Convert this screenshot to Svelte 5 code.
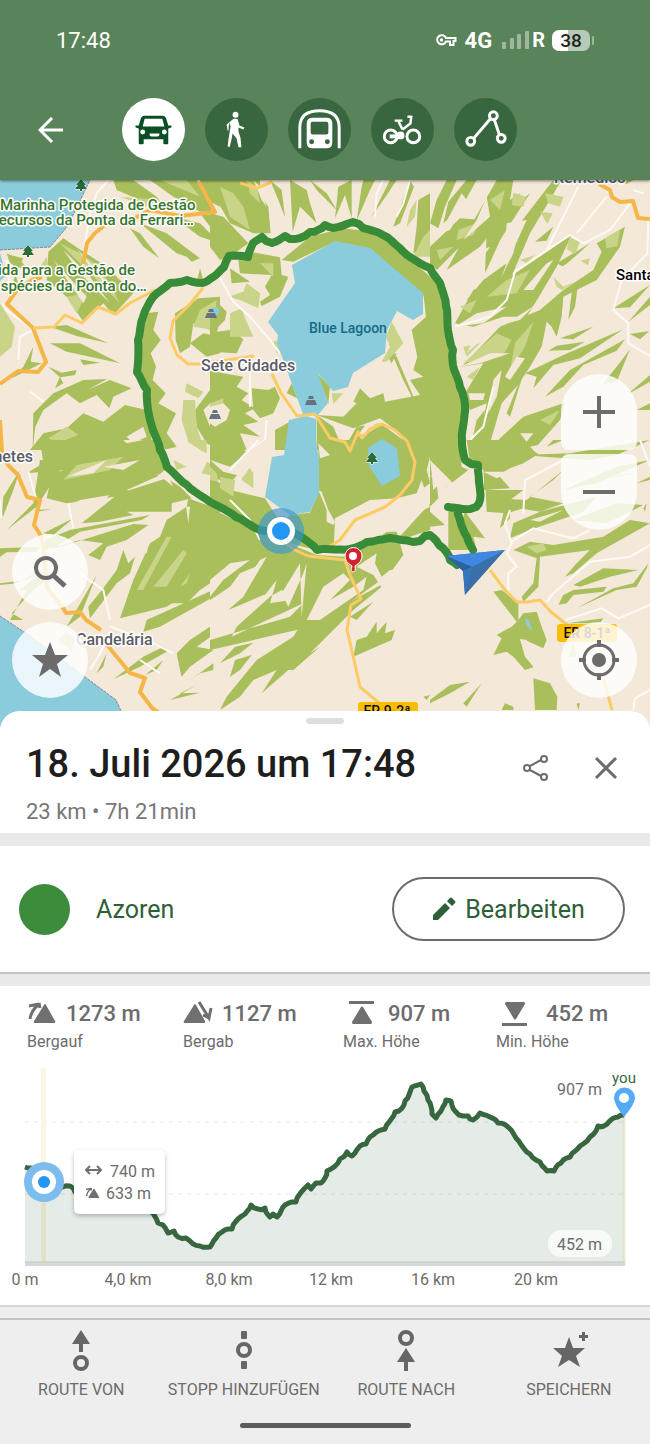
<script>
  let mode = $state('car');
  let picked = $state('');

  const modes = ['car', 'walk', 'train', 'bike', 'ruler'];
  const modeNames = { car: 'Auto', walk: 'Zu Fuß', train: 'ÖPNV', bike: 'Fahrrad', ruler: 'Lineal' };

  const stats = [
    { icon: 'up', value: '1273 m', label: 'Bergauf' },
    { icon: 'down', value: '1127 m', label: 'Bergab' },
    { icon: 'max', value: '907 m', label: 'Max. Höhe' },
    { icon: 'min', value: '452 m', label: 'Min. Höhe' }
  ];

  const actions = [
    { icon: 'from', label: 'ROUTE VON' },
    { icon: 'stop', label: 'STOPP HINZUFÜGEN' },
    { icon: 'to', label: 'ROUTE NACH' },
    { icon: 'save', label: 'SPEICHERN' }
  ];

  // map tiles: forest, light = fields, sand = clearings, road = white roads
  const tiles = [
    {
      x: 0, y: 180, h: 270,
      forest: [
        '340,0 400,0 470,50 500,90 420,60 350,30', '450,0 590,0 640,95 600,95 520,50', '390,145 420,160 478,235 430,200',
        '420,130 500,160 600,235 575,245 560,230 530,220', '520,110 600,130 660,190 600,170', '600,100 660,110 660,180',
        '145,215 190,175 250,215 320,260 400,340 340,405 310,370 250,425 200,350 140,300', '20,220 60,240 90,275 30,250',
        '600,0 660,0 660,80 620,60', '150,440 200,435 325,490 230,468', '150,490 240,490 360,550 200,515', '240,538 300,548 250,555',
        '35,595 70,560 100,500 92,545 125,550', '145,560 185,578 230,570 225,585 180,592', '30,225 70,235 40,300 60,330',
        '100,700 160,640 250,600 322,597 262,630 330,600 395,625 340,650 328,685 290,645 240,670 200,640 130,690 106,740 98,810',
        '90,810 130,760 200,745 250,700 310,725 375,675 440,690 460,810', '435,400 475,395 460,450 482,480 452,520 468,560 458,600 497,640 475,670 528,700 500,760 530,800 490,810 450,700 425,600 412,540 420,450',
        '525,400 595,355 660,350 660,430 630,450 580,430 570,500 540,520 527,480', '570,490 610,460 660,470 660,520 620,530', '585,690 660,590 660,810 620,790 590,740',
        '600,265 612,310 590,310', '180,590 190,610 165,625'
      ],
      light: ['180,190 240,220 300,260 360,370', '200,350 260,340 230,400', '0,370 45,440 35,500 0,530', '580,440 600,390 650,360 640,450', '560,610 610,635 595,655 555,635', '550,660 585,660 590,740 610,800 570,800 545,720', '145,775 200,740 235,765 170,790', '360,50 480,60 470,90', '480,0 560,0 600,50', '120,260 140,230 150,290'],
      sand: ['190,210 270,290 330,370 240,280', '230,205 300,280 350,350 270,260', '160,240 260,350 250,370', '610,690 640,660 660,665 660,740 630,740', '190,700 235,690 195,735 175,720', '380,770 430,740 440,770 400,790'],
      road: ['325,0 290,40 270,100 255,190 250,260', '5,370 20,390 100,450 60,470 55,540', '90,635 130,665', '20,240 30,330']
    },
    {
      x: 210, y: 180, h: 270,
      forest: [
        '0,100 40,110 115,190 80,215 30,240 0,200', '10,0 60,0 110,40 130,160 60,130 20,60', '60,0 150,0 150,40 175,80 182,160 130,160',
        '180,0 215,30 225,112 205,60', '240,0 290,30 300,70 320,130 270,80 248,155', '300,0 350,40 382,92 320,30', '375,115 385,20 425,0 425,115 405,45',
        '440,122 455,20 460,0 495,0 480,30', '485,110 520,60 560,0 540,0', '550,140 600,0 612,20 570,130', '620,140 625,60 660,40 660,200 610,220',
        '215,240 300,170 400,145 520,160 570,210 660,290 660,400 640,345 480,205 375,185 250,245', '85,240 120,215 210,232 215,285 235,290 210,350 155,378 150,365 180,345 165,320 185,285 90,280',
        '0,458 60,450 100,478 80,520 0,515', '640,340 660,350 660,810 590,810 570,760 510,715 430,745 320,705 400,710 440,670 430,665 450,625 480,655 520,640 525,665 630,645 600,600 640,590 610,570 622,530 605,450 648,410',
        '0,570 40,580 100,590 80,620 115,640 95,660 135,685 105,700 145,725 100,735 150,770 90,760 110,810 0,810', '125,625 175,630 195,620 210,655 190,700 150,715 130,690', '195,750 245,722 232,810 195,810', '230,640 245,610 262,655',
        '320,705 370,740 400,810 320,810', '400,810 440,740 510,730 580,780 600,810', '322,580 360,620 355,672', '545,520 560,530 640,720 580,600', '530,525 560,520 545,550', '60,265 120,305 65,310', '0,395 30,375 50,395 45,420 25,440 20,460 0,460'
      ],
      light: ['30,20 70,40 100,80 120,150 60,110', '110,0 140,20 150,70 120,40', '55,350 100,335 110,310 150,340 145,385 90,360', '60,400 95,385 105,415 130,470 60,470', '190,482 222,490 218,520 200,520', '545,425 580,490 530,545 515,545 540,500 528,470', '365,640 400,640 370,672', '590,140 600,90 620,60 615,110', '0,670 40,655 40,670 0,690', '150,250 190,250 190,290', '640,170 660,150 660,230 610,230'],
      sand: ['0,680 40,670 60,690 50,720 15,740 0,730', '170,710 185,715 160,780 140,810 120,810 150,770', '130,0 150,20 170,80 155,60', '470,730 510,735 480,755 440,770'],
      road: ['25,285 70,365 120,410 180,480 210,520', '495,110 500,40 520,0', '560,110 580,70 600,0', '120,580 120,680', '170,720 165,780 120,810']
    },
    {
      x: 430, y: 180, h: 270,
      forest: [
        '0,262 30,320 50,460 65,560 105,680 100,810 0,810', '0,130 20,60 50,0 80,0 45,80 25,145', '55,65 110,0 140,0 90,90 40,130', '0,200 90,115 165,120 100,190 20,270 0,250', '110,160 200,0 250,0 235,90 205,130 150,200 50,270',
        '170,160 240,60 270,40 220,160 165,280', '270,130 370,0 395,0 300,160 240,300 200,320 250,220', '315,185 370,140 350,182', '75,430 130,330 240,290 425,165 380,260 330,345 290,410 220,410 130,440', '190,130 300,40 210,180',
        '95,560 210,440 330,390 400,330 490,270 515,215 500,190 585,140 570,200 500,300 400,350 395,410 380,470 365,440 350,425 335,500 300,560 260,620 215,670 180,790 145,790 170,670 120,690 105,640 160,550', '415,420 425,340 445,305 435,380',
        '390,475 490,440 430,478', '355,512 380,497 465,485 420,510', '285,580 400,525 580,448 450,535 370,555 310,625 320,590', '345,650 420,570 585,478 560,512 460,555 400,620', '230,700 290,550 240,710', '205,780 280,710 405,668 390,720 310,810 180,810',
        '550,385 660,315 600,382', '595,425 660,350 660,375', '600,462 658,453 630,478', '518,612 560,560 600,508 560,605', '590,645 660,585 660,605', '110,360 160,300 230,250 200,330', '120,810 140,720 165,690 150,810', '380,250 480,190 400,260', '620,690 660,670 660,690', '570,0 610,0 590,12'
      ],
      light: ['250,38 288,50 280,80 245,75', '330,95 368,100 352,132', '345,40 400,50 390,80 355,70', '418,172 450,185 435,222 410,208', '100,550 200,460 245,480 220,525', '255,490 310,425 285,500 240,570', '525,175 570,150 562,198 530,205', '85,150 150,125 130,165 80,180', '170,350 230,300 300,270 260,340', '370,290 400,320 435,305 395,330 380,320', '100,500 150,490 110,530', '270,240 315,225 290,250', '90,380 140,360 120,400', '330,720 390,690 360,735', '20,210 70,200 30,240', '180,60 225,30 210,90', '440,245 480,235 470,270', '110,590 150,560 130,600'],
      sand: ['170,50 180,110 100,180 60,240 140,120', '95,40 110,60 60,150 30,160', '230,130 290,120 240,230 225,200', '130,220 180,200 160,230', '75,440 140,400 230,380 160,430', '395,260 440,235 480,260 460,290 400,290', '230,430 340,360 350,340 270,420', '280,330 350,250 370,240 310,330', '150,440 210,430 110,520', '225,590 260,530 285,535 240,600', '115,640 165,640 160,660 120,660', '270,760 310,760 290,785', '90,560 180,520 240,520 150,550', '190,600 215,570 200,650 175,700'],
      road: ['445,20 350,210', '75,440 180,410 230,360 255,275 420,165 460,190 540,150 600,70', '530,50 440,160', '655,110 652,220 575,300 550,390 595,430 595,490 660,528', '120,780 160,740 190,620', '610,30 640,40']
    },
    {
      x: 0, y: 440, h: 275,
      forest: [
        '120,0 465,0 500,85 470,110 380,150 420,160 200,190 140,175 150,130 110,120 190,90 80,100 130,70', '5,240 10,170 60,90 40,150', '20,270 100,190 120,60 200,60 110,200',
        '245,250 350,165 390,150 500,115 540,140 575,175 515,190 515,215 380,215 400,225 300,245', '565,175 660,210 660,400 500,500 360,535 400,420 450,310 480,290 500,240 560,200', '135,300 210,270 450,225 425,240 240,275 150,330 400,252 445,255 380,300 320,320 300,360 265,345 310,310 240,300 130,330',
        '310,445 350,390 370,330 385,370 405,350 390,400 350,430 270,535 265,500', '0,325 120,320 110,335 20,337 0,350', '0,430 80,420 140,380 50,430 0,435', '30,540 80,450 60,450 110,410 150,410 100,450 35,520 70,540', '200,560 290,405 240,530',
        '500,490 660,390 660,410 600,450 560,490', '430,575 440,540 660,440 660,460 480,560', '530,640 570,600 660,540 660,570 590,620 640,630 570,680 545,710 540,690', '340,718 430,650 490,620 500,635 420,680', '435,705 490,660 470,690', '290,700 320,640 310,680', '510,780 590,735 540,760 600,758', '570,720 640,670 640,690 600,700', '100,210 155,208 120,214', '130,280 220,235 160,285'
      ],
      light: ['230,75 370,50 330,90 190,120', '520,60 560,80 530,90', '560,0 620,0 620,45', '620,65 655,80 650,110 605,100', '410,450 500,290 515,290 430,450', '460,440 550,330 560,340 500,440', '175,600 200,575 225,600 215,635', '570,400 560,430 540,440'],
      sand: ['530,20 555,0 600,30 660,60 625,55 600,110 570,50', '470,100 485,120 500,100 520,140', '240,180 330,165 300,190 160,220', '370,0 430,0 380,10', '470,240 450,290 440,340 425,340', '565,250 570,200 558,200', '310,80 420,60 370,90', '200,110 320,60 280,100'],
      road: ['85,95 110,180', '205,190 220,265', '240,400 310,450 330,540', '330,560 440,600 520,640', '330,580 300,640 270,690', '5,235 0,180', '420,660 480,700']
    },
    {
      x: 210, y: 440, h: 275,
      forest: [
        '0,110 60,150 165,175 200,230 300,218 325,160 325,30 380,0 600,0 660,0 660,130 620,160 560,175 480,180 375,235 372,310 320,330 150,290 0,190', '560,300 660,190 660,270 600,290', '0,205 150,275 320,345 400,350 470,320 530,275 560,275 580,345 540,400 430,480 260,570 0,630',
        '0,0 60,0 130,50 60,130 0,110', '300,540 430,480 540,420 430,510 300,640 330,620 250,690 235,690 155,760 200,690 130,720 90,770 30,810 50,770 140,660 250,590 280,540', '60,710 75,660 125,645 90,690', '30,670 75,620 130,608 90,640', '430,650 440,600 470,590 500,545 500,580 530,545 525,580 555,570 545,600', '420,530 490,485 440,540', '640,770 660,765 650,780'
      ],
      light: ['0,80 20,100 25,125 0,120', '30,110 75,120 70,170 30,145', '95,120 110,70 130,100 130,145'],
      sand: ['0,60 60,80 120,30 165,0 190,0 185,20 150,40 100,110 40,95', '30,540 150,360 170,350 100,470 55,510 160,465 180,470 80,560 65,590 280,490 240,530 0,600 0,480 60,440 90,400 160,370', '200,420 145,490 215,450 240,480 180,490', '275,530 290,370 280,400 235,500 215,460 270,370', '0,420 60,370 120,360 40,420 0,470', '290,540 340,440 400,400 420,420 360,480 430,440 470,410 460,450 330,540', '440,380 500,340 495,370 515,410 540,390 570,390 540,430 520,450 490,405', '325,150 335,155 355,210 375,245 370,255 350,245 350,210', '325,10 360,45 330,55', '560,275 610,210 620,160 635,120 660,200 600,230', '165,170 180,55 190,55 170,170 240,225 230,235', '660,50 650,90 660,130', '390,310 430,245 520,210 590,175 620,165 600,240 560,270 460,290'],
      road: ['60,180 120,240 150,300', '145,0 60,90']
    },
    {
      x: 430, y: 440, h: 275,
      forest: [
        '0,0 85,0 95,80 115,90 50,140 0,105', '0,105 20,130 25,175 0,200', '110,0 270,0 325,42 280,70 240,85 205,105 240,145 165,150 160,90 120,65', '0,215 45,255 0,260', '55,215 80,210 90,260 105,215 165,295 130,290 140,330 55,330', '165,105 160,150 280,150 240,180 330,190 230,220 170,215', '190,175 290,180 400,90 370,120 300,170 400,190 330,215 240,200 240,235 210,265 220,220',
        '240,295 250,250 330,215 500,170 460,215 300,270', '270,45 420,40 660,0 560,45 480,60', '400,150 560,80 660,60 500,130', '250,330 300,305 370,315 520,290 600,240 660,250 500,340 430,400 405,410 440,370 480,330 330,350 325,440 280,485 275,470 310,430 320,355', '430,240 560,190 640,195 530,250',
        '385,495 400,465 430,450 530,440 520,455 430,465 410,490', '430,435 520,385 625,390 540,410 450,440', '440,505 550,445 610,430 655,370 650,385 620,440 560,450', '190,455 215,450 265,490 265,540 280,520 320,515 335,560 350,600 340,625 285,600 270,600 290,640 310,682 285,690 250,650 230,635 190,645 215,595 200,585 245,560 260,545', '310,715 360,730 382,770 380,810 315,810', '215,810 225,790 250,800 250,810', '0,780 60,735 120,725 60,760 0,790', '100,790 155,730 110,800', '440,790 450,790 445,810', '410,550 520,535 510,550', '350,20 370,0 400,0', '640,205 650,190 645,215', '620,130 660,110 660,120'
      ],
      light: ['290,320 340,310 350,330 320,340', '540,110 620,95 570,110', '415,650 430,610 440,650'],
      sand: ['0,60 60,120 90,160 30,130 10,150 5,100', '160,95 250,95 200,115', '290,100 350,80 300,125', '300,240 400,210 330,245', '270,597 290,600 310,680 285,650', '300,20 350,10 320,40'],
      road: ['660,80 630,0', '280,220 285,120 400,60', '240,210 225,250 245,310 230,340 260,380 235,400 235,450', '245,305 310,265 430,295 480,270', '350,485 370,460 480,365 600,350 660,315', '405,540 515,505 565,535 660,495', '610,810 615,775 660,750']
    }
  ];

  const track =
    '457,565 450,560 447,553 439,545 430,535 425,536 420,541 413,542 402,540 390,538 378,540 367,542 350,549 317,550 303,538 294,533 281,531 260,530 236,517 210,502 187,485 167,467 160,450 153,430 149,415 147,390 137,372 138,340 143,317 153,297 170,283 187,280 203,283 216,275 224,267 229,256 248,257 253,243 262,237 266,241 272,243 279,240 285,236 290,239 300,238 310,232 318,230 325,225 333,228 342,226 353,222 359,224 363,228 383,235 395,244 407,255 430,268 440,283 446,306 448,330 453,350 453,365 460,387 465,405 464,420 462,440 465,460 471,464 478,465 479,482 480,500 476,507 470,509 457,508 448,507 457,508 460,520 467,537 473,550';

  const heights =
    '25,1167 31,1168 35,1173 46,1183 56,1190 62,1187 70,1186 75,1192 100,1193 120,1198 136,1200 150,1211 158,1223 163,1225 168,1233 174,1231 178,1237 186,1238 190,1241 200,1246 210,1247 216,1238 222,1232 232,1229 238,1219 245,1214 251,1205 258,1209 265,1208 270,1217 273,1214 277,1217 285,1205 296,1202 304,1189 308,1185 311,1189 316,1183 321,1183 325,1178 327,1171 331,1169 340,1159 347,1152 352,1156 360,1146 366,1144 373,1135 385,1129 395,1112 399,1111 405,1101 412,1087 418,1085 421,1084 424,1091 428,1100 432,1114 436,1118 441,1111 446,1100 451,1101 456,1112 463,1116 468,1116 473,1120 480,1113 490,1117 498,1123 508,1127 516,1138 530,1154 540,1162 547,1171 554,1171 561,1163 570,1157 580,1146 590,1137 598,1126 604,1126 612,1119 618,1117 624,1115';

  // gps lines are never straight: split each leg and push the new points a bit
  function roughen(line, step, amount) {
    const pts = line.split(' ').map((p) => p.split(',').map(Number));
    const out = [pts[0]];
    let n = 0;
    for (let i = 1; i < pts.length; i++) {
      const [x0, y0] = pts[i - 1];
      const [x1, y1] = pts[i];
      const len = Math.hypot(x1 - x0, y1 - y0);
      const parts = Math.max(1, Math.round(len / step));
      for (let k = 1; k < parts; k++) {
        n++;
        const push = Math.sin(n * 12.9898) * amount;
        out.push([
          x0 + ((x1 - x0) * k) / parts - ((y1 - y0) / len) * push,
          y0 + ((y1 - y0) * k) / parts + ((x1 - x0) / len) * push
        ]);
      }
      out.push([x1, y1]);
    }
    return out.map((p) => p[0].toFixed(1) + ',' + p[1].toFixed(1)).join(' ');
  }

  const route = roughen(track, 5, 0.8);
  const profile = roughen(heights, 4, 1.2);

  const ticks = [
    [25, '0 m'],
    [128, '4,0 km'],
    [229, '8,0 km'],
    [331, '12 km'],
    [433, '16 km'],
    [536, '20 km']
  ];
</script>

{#snippet climb()}
  <path d="M7 22 17 6q1-2 2 0l9 16q1 2-1 2H8q-2 0-1-2z" />
  <path d="M3 6l8-1q-7 6-8 14" fill="none" stroke="#fff" stroke-width="6" />
  <path d="M2 7l10-2M12 4l1 5M11 6Q4 12 3 20" fill="none" stroke="#707070" stroke-width="3" />
{/snippet}

{#snippet tree(x, y)}
  <g transform="translate({x} {y})">
    <path class="tree" d="M0-5 5 1H3l3 4H1v2h-2V5h-5l3-4h-2z" />
  </g>
{/snippet}

{#snippet peak(x, y)}
  <path class="peak" transform="translate({x} {y})" d="M-2-5h4l1 3h-6zM-4-1h8l2 5H-6z" />
{/snippet}

<div class="app">
  <header>
    <div class="status">
      <time>17:48</time>
      <div class="signals">
        <svg class="key" viewBox="0 0 21 12" width="21" height="12">
          <path d="M10 4h9.500v3h-2v4h-3.500V7.500H10A4.600 4.600 0 1 1 10 4z" fill="none" stroke="#fff" stroke-width="2" />
          <circle cx="5.500" cy="6" r="1.700" fill="#fff" />
        </svg>
        <b class="net">4G</b>
        <svg viewBox="0 0 28 20" width="28" height="20" fill="#9fb79f">
          <rect x="0" y="12" width="4" height="7" rx="1" /><rect x="8" y="8" width="4" height="11" rx="1" />
          <rect x="15" y="4" width="4" height="15" rx="1" /><rect x="23" y="1" width="4" height="18" rx="1" />
        </svg>
        <b class="roam">R</b>
        <span class="battery">38</span>
        <span class="cap"></span>
      </div>
    </div>
    <nav>
      <button class="back" aria-label="Zurück">
        <svg viewBox="0 0 26 26" width="26" height="26"><path d="M25 13H2M14 1 2 13l12 12" fill="none" stroke="#fff" stroke-width="3" /></svg>
      </button>
      <div class="modes">
        {#each modes as m}
          <button class="mode" class:active={mode == m} aria-label={modeNames[m]} onclick={() => (mode = m)}>
            <svg viewBox="0 0 64 64" width="63" height="63" fill="currentColor">
              {#if m == 'car'}
                <path fill-rule="evenodd" d="M23 18h18q3 0 4 3l2 7h3q1 1 0 2l-3 1v15q0 1-1 1h-3q-1 0-1-1v-4H22v4q0 1-1 1h-3q-1 0-1-1V31l-3-1q-1-1 0-2h3l2-7q1-3 4-3zm0 3-2 8h22l-2-8zm-2 11a2.500 2.500 0 1 0 0 5 2.500 2.500 0 0 0 0-5zm22 0a2.500 2.500 0 1 0 0 5 2.500 2.500 0 0 0 0-5zM28 36v1q0 2 2 2h6q2 0 2-2v-1z" />
              {:else if m == 'walk'}
                <circle cx="31" cy="17" r="3" />
                <path d="M29 21h4l2 7 5 2-1 2-5-2 0 4 2 6 1 10h-3l-2-9-4-5-1 6-2 8-2-1 1-8 2-12-1-4-1 4v4h-1l-1-6z" />
              {:else if m == 'train'}
                <path d="M12 51V30q0-17 20-17t20 17v21" fill="none" stroke="currentColor" stroke-width="3" />
                <path fill-rule="evenodd" d="M25 20h14q6 0 6 6v19q0 6-5 6H24q-5 0-5-6V26q0-6 6-6zm0 4q-2 0-2 2v9q0 2 2 2h14q2 0 2-2v-9q0-2-2-2zm-1 18a2.400 2.400 0 1 0 0 5 2.400 2.400 0 0 0 0-5zm16 0a2.400 2.400 0 1 0 0 5 2.400 2.400 0 0 0 0-5z" />
              {:else if m == 'bike'}
                <g fill="none" stroke="currentColor" stroke-width="3">
                  <circle cx="20" cy="39" r="6.500" /><circle cx="43" cy="39" r="6.500" />
                  <path d="M24 23h8M28 24l4 8M41 19h-4M41 18l-1 8-8 6" stroke-width="2.500" />
                </g>
                <circle cx="30" cy="38" r="4" /><path d="M19 37h11v4H19z" />
              {:else}
                <g fill="none" stroke="currentColor" stroke-width="3">
                  <circle cx="40" cy="18" r="4" /><circle cx="17" cy="44" r="4" /><circle cx="48" cy="41" r="4" />
                  <path d="M37 21 20 41M41 22l5 15" />
                </g>
              {/if}
            </svg>
          </button>
        {/each}
      </div>
    </nav>
  </header>

  <section class="map">
    <svg class="canvas" viewBox="0 180 650 551" role="img" aria-label="Karte">
      <rect y="180" width="650" height="551" fill="#f4e8d8" />
      {#each tiles as t}
        <svg x={t.x} y={t.y} width="220" height={t.h} viewBox="0 0 660 {t.h * 3}">
          {#each t.forest as p}<polygon points={p} fill="#a9bf5c" />{/each}
          {#each t.light as p}<polygon points={p} fill="#c9d488" />{/each}
          {#each t.sand as p}<polygon points={p} fill="#f4e8d8" />{/each}
          {#each t.road as p}<polyline points={p} fill="none" stroke="#fdfaf5" stroke-width="6" />{/each}
        </svg>
      {/each}

      <g fill="#8accdc">
        <path d="M0 180H90L79 203L67 227L50 247L0 250zM0 253L6 275L0 281z" />
        <path d="M0 616L27 634L85 677L116 700L121 711V731H0z" />
        <path d="M335 241L370 248L423 293V314L413 320L397 311L387 330L385 353L353 373L348 387L333 391L318 373L328 403L317 416L303 414L277 343L278 335L268 322L295 283L292 265z" />
        <path d="M289 420L306 416L316 419V440L319 460V493L310 512L290 515L265 497L272 457L284 455z" />
        <path d="M368 448L382 439L397 448L400 476L382 486L369 466z" />
        <path d="M525 618L529 620L532 631L527 626z" />
      </g>
      <path d="M0 250L50 247L67 227L79 203L90 180M0 616L27 634L85 677L116 700L121 711V731" fill="none" stroke="#86889a" stroke-width="1" stroke-dasharray="3 1" />
      <g fill="none" stroke="#f5b547" stroke-width="4" stroke-linejoin="round">
        <path d="M0 384L18 371L38 372L46 362L33 328L7 304L17 290L32 280L42 277M83 264L87 243L95 233L104 226M135 218L150 210L180 216L215 212L199 182M0 420L2 452L8 465L18 475L27 497L40 500L34 525L41 536L44 552L47 588L63 608L66 613L80 612L86 620L101 630M103 640L130 673L145 678L140 692L152 708L162 715" />
        <path d="M599 184L610 190L612 197L620 202L633 201L638 218L650 219" />
      </g>
      <g fill="none" stroke="#fccb66" stroke-width="3" stroke-linejoin="round">
        <path d="M33 328L54 327L65 315L82 323L98 307L116 314L130 303L155 290M203 288L190 304L173 321L170 338L177 355L188 364H200L254 356M272 374L281 393L297 416L315 414L330 438L345 442L350 451L358 432L362 438L370 429L382 424L395 430L407 441L415 462L412 480L400 495L385 507L355 520L340 540L327 548" />
        <path d="M281 540L295 550L308 556L345 560L350 575L361 599L351 605L347 630L354 660L360 687L378 702L390 711M490 570L505 590L517 602H527L540 600L551 612L571 628M604 680L612 710" />
        <path d="M240 183L257 188L272 182" />
      </g>

      <polyline points={route} fill="none" stroke="#388c38" stroke-width="8" stroke-linejoin="round" stroke-linecap="round" />

      {@render tree(81, 184)}
      {@render tree(28, 250)}
      {@render tree(372, 457)}
      <circle cx="215" cy="311" r="4" fill="#8accdc" />
      {@render peak(211, 314)}
      {@render peak(311, 401)}
      {@render peak(215, 415)}

      <g class="park">
        <text x="0" y="210">Marinha Protegida de Gestão</text>
        <text x="194" y="225" text-anchor="end">ecursos da Ponta da Ferrari…</text>
        <text x="135" y="275" text-anchor="end">ida para a Gestão de</text>
        <text x="147" y="291" text-anchor="end">spécies da Ponta do…</text>
      </g>
      <g class="town">
        <text x="201" y="371">Sete Cidades</text>
        <text x="76" y="645">Candelária</text>
        <text x="33" y="462" text-anchor="end">netes</text>
        <text x="554" y="183">Remédios</text>
      </g>
      <text class="city" x="616" y="280">Santa</text>
      <text class="lake" x="309" y="333">Blue Lagoon</text>

      <rect x="557" y="624" width="60" height="18" rx="3" fill="#fbbd04" />
      <text class="badge" x="587" y="638">ER 8-1ª</text>
      <rect x="358" y="702" width="60" height="18" rx="3" fill="#fbbd04" />
      <text class="badge" x="387" y="716">ER 9-2ª</text>

      <circle cx="281" cy="531" r="23" fill="#3c97cf" opacity=".65" />
      <circle cx="281" cy="531" r="14" fill="#fff" />
      <circle cx="281" cy="531" r="9" fill="#2196f3" />

      <path d="M353 572q-3 0-1-6-7-4-7-10a8.500 8.500 0 0 1 17 0q0 6-7 10 1 6-2 6z" fill="#d2232f" stroke="#fff" stroke-width="1" />
      <circle cx="353" cy="556" r="4" fill="#fff" />

      <path d="M446 556L505 550L465 595L463 571z" fill="#3a6fa8" />
      <path d="M446 556L505 550L472 567z" fill="#3f87df" />
      <path d="M446 556L472 567L463 571z" fill="#2c62a0" />
      <path d="M463 571L472 567L465 595z" fill="#3577bd" />
    </svg>

    <div class="controls left">
      <button class="round" aria-label="Suche">
        <svg viewBox="0 0 34 34" width="34" height="34" fill="none" stroke="#6c6c6c"><circle cx="13" cy="13" r="10" stroke-width="4" /><path d="m21 21 11 10" stroke-width="5" /></svg>
      </button>
      <button class="round" aria-label="Lesezeichen">
        <svg viewBox="0 0 38 36" width="38" height="36"><path d="m19 0 5 13h13L26 22l4 13-11-8-11 8 4-13L1 13h13z" fill="#6c6c6c" /></svg>
      </button>
    </div>
    <div class="controls right">
      <div class="zoom">
        <button class="plus" aria-label="Vergrößern">
          <svg viewBox="0 0 32 32" width="32" height="32"><path d="M0 16h32M16 0v32" stroke="#6c6c6c" stroke-width="4" /></svg>
        </button>
        <button class="minus" aria-label="Verkleinern">
          <svg viewBox="0 0 32 32" width="32" height="32"><path d="M0 16h32" stroke="#6c6c6c" stroke-width="4" /></svg>
        </button>
      </div>
      <button class="round" aria-label="Mein Standort">
        <svg viewBox="0 0 40 40" width="40" height="40" stroke="#6c6c6c" stroke-width="3" fill="none">
          <circle cx="20" cy="20" r="15" /><circle cx="20" cy="20" r="7" fill="#6c6c6c" stroke="none" />
          <path d="M20 0v7M20 33v7M0 20h7M33 20h7" stroke-width="4" />
        </svg>
      </button>
    </div>
  </section>

  <main>
    <div class="head">
      <span class="handle"></span>
      <div class="title-row">
        <h1>18. Juli 2026 um 17:48</h1>
        <button class="plain" aria-label="Teilen">
          <svg viewBox="0 0 28 28" width="28" height="28" fill="none" stroke="#6c6c6c" stroke-width="2">
            <circle cx="22" cy="5" r="3" /><circle cx="5" cy="14" r="3" /><circle cx="22" cy="23" r="3" /><path d="m8 12 11-6M8 16l11 6" />
          </svg>
        </button>
        <button class="plain" aria-label="Schließen">
          <svg viewBox="0 0 28 28" width="28" height="28"><path d="m4 4 20 20M24 4 4 24" stroke="#6c6c6c" stroke-width="3" /></svg>
        </button>
      </div>
      <p>23 km • 7h 21min</p>
    </div>

    <div class="list">
      <span class="dot"></span>
      <a href="#azoren">Azoren</a>
      <button class="edit">
        <svg viewBox="0 0 24 24" width="24" height="24"><path d="M1 18v5h5L18 11l-5-5zM15 4l5 5 3-3q1-1 0-2l-3-3q-1-1-2 0z" fill="#2d6038" /></svg>
        Bearbeiten
      </button>
    </div>

    <div class="elevation">
      <div class="stats">
        {#each stats as s}
          <div class="stat">
            <div class="value">
              <svg viewBox="0 0 30 28" width="30" height="28" fill="#707070">
                {#if s.icon == 'up'}
                  {@render climb()}
                {:else if s.icon == 'down'}
                  <path d="M1 22 11 6q1-2 2 0l9 16q1 2-1 2H2q-2 0-1-2z" />
                  <path d="m15 2 9 16" fill="none" stroke="#fff" stroke-width="6" />
                  <path d="m16 3 10 16 2-10M26 19l-6-3" fill="none" stroke="#707070" stroke-width="3" />
                {:else if s.icon == 'max'}
                  <path d="M2 2h25v3H2zM5 23l9-15q1-1 2 0l9 15q0 2-1 2H6q-1 0-1-2z" />
                {:else}
                  <path d="M2 24h25v3H2zM5 5l9 15q1 1 2 0l9-15q0-2-1-2H6q-1 0-1 2z" />
                {/if}
              </svg>
              {s.value}
            </div>
            <div class="label">{s.label}</div>
          </div>
        {/each}
      </div>

      <svg class="chart" viewBox="0 1060 650 236" role="img" aria-label="Höhenprofil">
        <path d="M25 1122H624M25 1194H624" stroke="#e8e8e8" stroke-width="1" stroke-dasharray="4 5" />
        <rect x="41" y="1068" width="5" height="196" fill="#fbf5e4" />
        <polygon points="25,1266 {profile} 624,1266" fill="#2d6038" opacity=".12" />
        <path d="M44 1180V1264M624 1115V1264" stroke="#e5dfc0" stroke-width="3" opacity=".7" />
        <polyline points={profile} fill="none" stroke="#37663f" stroke-width="5" stroke-linejoin="round" />
        <path d="M25 1264H625" stroke="#d5dad6" stroke-width="4" />
        <path d="M25 1262H625" stroke="#c2cac3" stroke-width="1" />
        <circle cx="44" cy="1182" r="20" fill="#7dbcee" />
        <circle cx="44" cy="1182" r="12" fill="#fff" />
        <circle cx="44" cy="1182" r="6" fill="#2196f3" />
        <rect class="tip" x="74" y="1150" width="91" height="64" rx="5" fill="#fff" />
        <path d="M86 1170H101M90 1166L86 1170L90 1174M97 1166L101 1170L97 1174" fill="none" stroke="#707070" stroke-width="2" />
        <svg x="85" y="1186" width="15" height="14" viewBox="0 0 30 28" fill="#707070">{@render climb()}</svg>
        <g class="num">
          <text x="110" y="1177">740 m</text>
          <text x="106" y="1199">633 m</text>
          <text x="602" y="1095" text-anchor="end">907 m</text>
          <rect x="548" y="1230" width="64" height="27" rx="13" fill="#f8faf8" />
          <text x="602" y="1250" text-anchor="end">452 m</text>
          {#each ticks as [x, label]}
            <text {x} y="1285" text-anchor="middle">{label}</text>
          {/each}
        </g>
        <text class="you" x="624" y="1083" text-anchor="middle">you</text>
        <path d="M624 1117Q614 1104 614 1098a10.500 10.500 0 0 1 21 0Q635 1104 624 1117z" fill="#55aaf5" />
        <circle cx="624" cy="1098" r="5" fill="#fff" />
      </svg>
    </div>
  </main>

  <footer>
    <div class="actions">
      {#each actions as a}
        <button class="action" class:picked={picked == a.icon} onclick={() => (picked = a.icon)}>
          <svg viewBox="0 0 42 42" width="42" height="42" fill="#666">
            {#if a.icon == 'from'}
              <path d="m21 0 9 14h-7v8h-4v-8h-7z" /><circle cx="21" cy="33" r="6" fill="none" stroke="#666" stroke-width="4" />
            {:else if a.icon == 'stop'}
              <rect x="18" y="1" width="6" height="8" rx="1" /><circle cx="21" cy="20" r="6" fill="none" stroke="#666" stroke-width="4" /><rect x="18" y="31" width="6" height="8" rx="1" />
            {:else if a.icon == 'to'}
              <circle cx="21" cy="8" r="6" fill="none" stroke="#666" stroke-width="4" /><path d="m21 18 9 14h-7v9h-4v-9h-7z" />
            {:else}
              <path d="m21 7 4 11h12l-9 8 4 11-11-7-11 7 4-11-9-8h12zM34 2h3v3h3v3h-3v3h-3V8h-3V5h3z" />
            {/if}
          </svg>
          {a.label}
        </button>
      {/each}
    </div>
    <span class="home"></span>
  </footer>
</div>

<style>
  :global(body) {
    background: #eee;
  }

  .app {
    font-family: Roboto, sans-serif;
    color: #6c6c6c;
    background: #eee;
  }

  button {
    border: 0;
    padding: 0;
    margin: 0;
    background: none;
    font: inherit;
    color: inherit;
    cursor: pointer;
  }

  svg {
    display: block;
    flex: none;
  }

  header {
    position: relative;
    z-index: 1;
    background: #598359;
    color: #fff;
    padding-bottom: 19px;
    box-shadow: 0 1px 3px rgba(0, 0, 0, 0.5);
  }

  .status {
    display: flex;
    justify-content: space-between;
    align-items: center;
    height: 80px;
    padding: 0 56px;
    font-size: 22px;
  }

  .signals {
    display: flex;
    align-items: center;
    gap: 2px;
  }

  .net {
    font-size: 22px;
    margin: 0 8px 0 6px;
  }

  .roam {
    font-size: 20px;
  }

  .battery {
    width: 38px;
    margin-left: 5px;
    border-radius: 7px;
    background: linear-gradient(90deg, #fff 42%, #b7c9b7 42%);
    color: #222;
    font-size: 19px;
    font-weight: 500;
    line-height: 21px;
    text-align: center;
  }

  .cap {
    width: 2px;
    height: 9px;
    border-radius: 1px;
    background: #9fb79f;
  }

  nav {
    display: flex;
    align-items: center;
    padding: 18px 0 0 38px;
  }

  .back {
    width: 84px;
  }

  .modes {
    display: flex;
    gap: 20px;
  }

  .mode {
    border-radius: 50%;
    background: #37663f;
    color: #fff;
  }

  .mode.active {
    background: #fff;
    color: #0b4f26;
  }

  .map {
    position: relative;
  }

  .canvas {
    width: 100%;
    height: auto;
  }

  .tree {
    fill: #2c6a35;
    stroke: #fff;
    stroke-width: 1;
    paint-order: stroke;
  }

  .peak {
    fill: #687382;
  }

  .park,
  .town,
  .city {
    stroke: #fff;
    stroke-width: 3;
    stroke-linejoin: round;
    paint-order: stroke;
    font-weight: 500;
  }

  .park {
    fill: #38762c;
    font-size: 15px;
  }

  .town {
    fill: #5c5c66;
    font-size: 16px;
  }

  .city {
    fill: #000;
    font-size: 15px;
  }

  .lake {
    fill: #136b85;
    font-size: 14px;
    font-weight: 500;
  }

  .badge {
    fill: #111;
    font-size: 14px;
    font-weight: 500;
    text-anchor: middle;
  }

  .controls {
    position: absolute;
    bottom: 33px;
    display: flex;
    flex-direction: column;
  }

  .left {
    left: 12px;
    gap: 12px;
  }

  .right {
    right: 13px;
    gap: 92px;
  }

  .zoom {
    display: grid;
    gap: 4px;
  }

  .round,
  .plus,
  .minus {
    display: grid;
    place-items: center;
    width: 76px;
    height: 76px;
    border-radius: 50%;
    background: rgba(255, 255, 255, 0.82);
  }

  .plus {
    border-radius: 38px 38px 8px 8px;
  }

  .minus {
    border-radius: 8px 8px 38px 38px;
  }

  main {
    position: relative;
    margin-top: -20px;
    border-radius: 20px 20px 0 0;
    background: #e9e9e9;
  }

  .head {
    padding: 7px 26px;
    border-radius: 20px 20px 0 0;
    background: #fff;
  }

  .handle {
    display: block;
    width: 38px;
    height: 6px;
    margin: 0 auto;
    border-radius: 3px;
    background: #dedede;
  }

  .title-row {
    display: flex;
    align-items: flex-end;
    gap: 42px;
    padding: 16px 4px 0 0;
  }

  .plain {
    padding-bottom: 6px;
  }

  h1 {
    flex: 1;
    margin: 0;
    color: #1e1e1e;
    font-size: 38px;
    font-weight: 500;
    line-height: 48px;
  }

  p {
    margin: 9px 0 0;
    color: #777;
    font-size: 22px;
    line-height: 29px;
  }

  .list {
    display: flex;
    align-items: center;
    gap: 26px;
    height: 126px;
    margin-top: 13px;
    padding: 0 25px 0 19px;
    border-bottom: 2px solid #c4c4bc;
    background: #fff;
    color: #2d6038;
    font-size: 25px;
  }

  .dot {
    width: 51px;
    height: 51px;
    border-radius: 50%;
    background: #3d8c3c;
  }

  .list a {
    flex: 1;
    color: inherit;
    text-decoration: none;
  }

  .edit {
    display: flex;
    justify-content: center;
    align-items: center;
    gap: 9px;
    box-sizing: border-box;
    width: 233px;
    height: 64px;
    border: 2px solid #6c6c6c;
    border-radius: 32px;
  }

  .elevation {
    margin-top: 12px;
    padding: 12px 0 9px;
    border-bottom: 2px solid #d4d6d4;
    background: #fff;
  }

  .stats {
    display: grid;
    grid-template-columns: 156fr 160fr 153fr 154fr;
    padding-left: 27px;
  }

  .value {
    display: flex;
    align-items: center;
    gap: 9px;
    height: 30px;
    font-size: 22px;
    font-weight: 500;
  }

  .label {
    font-size: 16px;
    line-height: 28px;
  }

  .stat:nth-child(n + 3) .value {
    gap: 11px;
    padding-left: 4px;
  }

  .stat:nth-child(4) .value {
    gap: 16px;
  }

  .chart {
    width: 100%;
    height: auto;
    margin-top: 4px;
  }

  .num {
    fill: #6c6c6c;
    font-size: 16px;
  }

  .you {
    fill: #37663f;
    font-size: 15px;
  }

  .tip {
    filter: drop-shadow(0 2px 2px rgba(0, 0, 0, 0.25));
  }

  footer {
    margin-top: 11px;
    padding: 10px 0 16px;
    border-top: 2px solid #c4c4bc;
  }

  .actions {
    display: grid;
    grid-template-columns: repeat(4, 1fr);
  }

  .action {
    display: flex;
    flex-direction: column;
    align-items: center;
    gap: 6px;
    font-size: 16px;
    line-height: 24px;
    white-space: nowrap;
  }

  .action.picked {
    color: #2d6038;
  }

  .home {
    display: block;
    width: 171px;
    height: 5px;
    margin: 21px auto 0;
    border-radius: 3px;
    background: #5c5c5c;
  }
</style>
